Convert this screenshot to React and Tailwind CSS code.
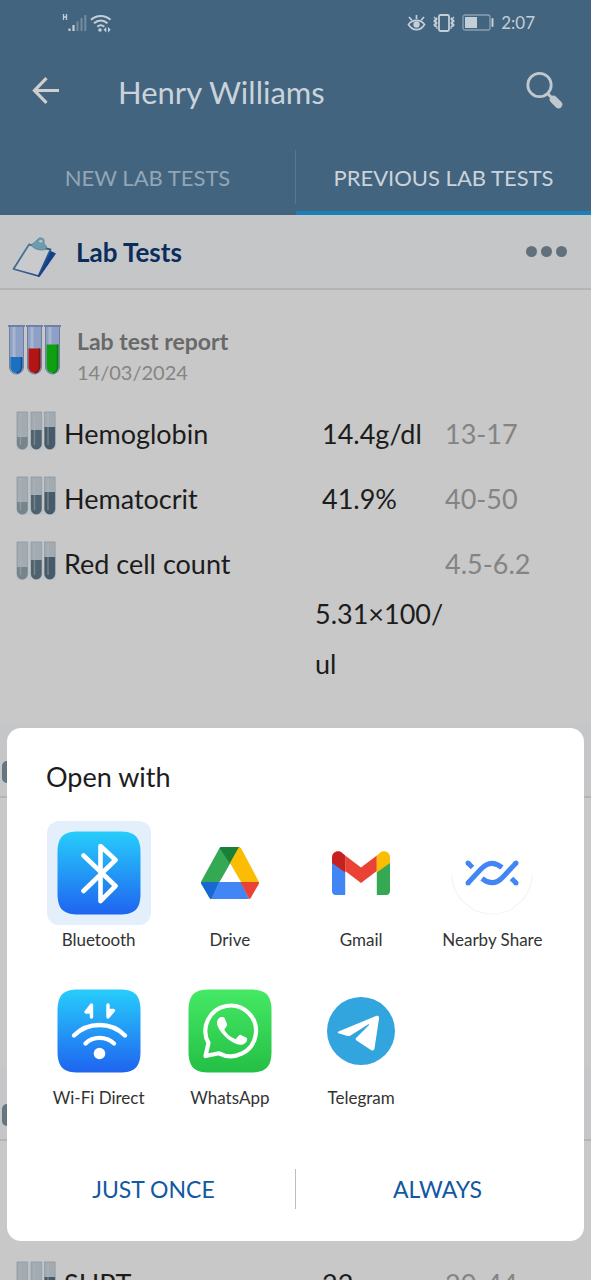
import React, { useState } from 'react';

const results = [
  { name: 'Hemoglobin', value: '14.4g/dl', range: '13-17' },
  { name: 'Hematocrit', value: '41.9%', range: '40-50' },
  { name: 'Red cell count', value: '5.31×100/ ul', range: '4.5-6.2', wraps: true },
];

const moreResults = [{ name: 'SHPT', value: '22', range: '20-44' }];

const SignalIcon = () => (
  <svg width="25" height="20" viewBox="0 0 25 20" fill="none">
    <path d="M1.5 1v6M4.5 1v6M1.5 4h3" stroke="#c3ced8" strokeWidth="1.3" />
    <path d="M7.5 15.5V18M11.5 12v6" stroke="#c3ced8" strokeWidth="2.2" />
    <path d="M15.5 8.5V18M19.5 5v13M23.3 2v16" stroke="#718ba1" strokeWidth="2" />
  </svg>
);

const WifiIcon = () => (
  <svg width="22" height="20" viewBox="0 0 22 20" fill="none" stroke="#c3ced8" strokeWidth="2">
    <path d="M1 6.8c5.6-5.2 14-5.2 19.5 0M4 10.3c4-3.7 9.5-3.7 13.5 0M7.3 13.7c2.2-1.900 4.8-1.900 7 0" />
    <circle cx="10" cy="17" r="1.8" fill="#c3ced8" stroke="none" />
    <path d="M16.300 14 13.6 16.800l2.700 2.600zM18 14l2.700 2.800L18 19.400z" fill="#c3ced8" stroke="none" />
  </svg>
);

const EyeIcon = () => (
  <svg width="19" height="18" viewBox="0 0 19 18" fill="none" stroke="#c3ced8" strokeWidth="1.7">
    <path d="M1.5 10.5C5.5 5 13.5 5 17.5 10.5 13.5 17.3 5.5 17.3 1.5 10.5z" />
    <path d="M9.5 5V1M4.800 6.200 2 3M14.200 6.200 17 3" />
    <circle cx="9.5" cy="10.5" r="3.2" fill="#c3ced8" stroke="none" />
  </svg>
);

const VibrateIcon = () => (
  <svg width="22" height="18" viewBox="0 0 22 18" fill="none" stroke="#c3ced8" strokeWidth="1.8">
    <rect x="6" y="1" width="10" height="16" rx="1.5" />
    <path d="M1 3l1.800 2L1 7l1.800 2L1 11l1.800 2M3.300 3.500 4 5 2.500 7 4 9l-1.500 2L4 13v2M21 3l-1.800 2L21 7l-1.800 2 1.800 2-1.800 2M18.700 3.500 18 5l1.500 2L18 9l1.500 2-1.500 2v2" strokeWidth="1.2" />
  </svg>
);

const BatteryIcon = () => (
  <svg width="32" height="17" viewBox="0 0 32 17">
    <rect x="1" y="1" width="27" height="15" rx="2" fill="none" stroke="#8ba0b2" strokeWidth="1.3" />
    <rect x="3" y="3" width="12" height="11" fill="#c3ced8" />
    <rect x="29.5" y="4" width="2" height="9" rx="1" fill="#c3ced8" />
  </svg>
);

const BackIcon = () => (
  <svg width="27" height="27" viewBox="0 0 27 27" fill="none" stroke="#d0cfcc" strokeWidth="3.2">
    <path d="M27 13.500H3.500M14.500 1.200 2.500 13.500 14.500 25.800" />
  </svg>
);

const SearchIcon = () => (
  <svg width="37" height="38" viewBox="0 0 37 38" fill="none" stroke="#c0c7cd">
    <circle cx="13.5" cy="14" r="11.7" strokeWidth="2.8" />
    <path d="m21.5 22.500 5 5" strokeWidth="3" />
    <path d="m27.500 28.500 5 5" strokeWidth="7.5" strokeLinecap="round" />
  </svg>
);

const ClipboardIcon = () => (
  <svg width="60" height="68" viewBox="0 0 60 68">
    <defs>
      <linearGradient id="board" x1="0" y1="0" x2="1" y2="1">
        <stop offset="0" stopColor="#5a8699" />
        <stop offset="1" stopColor="#153c80" />
      </linearGradient>
    </defs>
    <path d="m49 32 7 3.500L39.500 59 36 57z" fill="#12418c" />
    <path d="m29 26.500 21.500 5L38.500 58 13.500 51z" fill="#c9cace" stroke="url(#board)" strokeWidth="1.8" strokeLinejoin="round" />
    <path d="m31 27 3.500-2.500 3-3c1.500-2.500 6.500-2 6.500 1v3l2.500 3-1 3c-5 1.500-12-.5-14.500-4.500z" fill="#6c9cae" stroke="#4d8296" strokeWidth=".8" />
    <ellipse cx="40.800" cy="23.200" rx="1.8" ry="1.300" fill="#b9c5c9" />
  </svg>
);

const FolderIcon = () => (
  <svg width="60" height="60" viewBox="0 0 60 60">
    <rect x="2" y="31" width="48" height="22" rx="5" fill="#66767f" />
  </svg>
);

const TubesIcon = () => (
  <svg width="54" height="50" viewBox="0 0 54 50">
    {[
      { x: 1.5, fill: '#1b70c0', shade: '#0f4e91', top: 32 },
      { x: 19.5, fill: '#b31515', shade: '#7d1414', top: 23.5 },
      { x: 37.5, fill: '#0fa012', shade: '#0b7a13', top: 19.5 },
    ].map(tube => (
      <g key={tube.x}>
        <path d={`M${tube.x} 1V42a7 7 0 0 0 14 0V1z`} fill="#8fa0c6" stroke="#6e7f9f" />
        <path d={`M${tube.x + 4.5} 2V32`} stroke="#a9b5ce" strokeWidth="3" />
        <path d={`M${tube.x + 1} ${tube.top}V42a6 6 0 0 0 12 0V${tube.top}z`} fill={tube.fill} />
        <path d={`M${tube.x + 12} ${tube.top}V42a6 6 0 0 1-5 6`} stroke={tube.shade} strokeWidth="1.5" fill="none" />
        <path d={`M${tube.x - 1.5} 1h17`} stroke="#6f80a8" strokeWidth="2" />
      </g>
    ))}
  </svg>
);

const SmallTubesIcon = () => (
  <svg width="40" height="46" viewBox="0 0 40 46">
    <rect width="40" height="39" fill="#bcc3c7" opacity=".6" />
    {[
      { x: 1, fill: '#76848d', top: 26 },
      { x: 15, fill: '#4f626f', top: 19 },
      { x: 28.5, fill: '#465a69', top: 16 },
    ].map(tube => (
      <g key={tube.x}>
        <path d={`M${tube.x} 1V33a5.3 5.3 0 0 0 10.600 0V1z`} fill="#a2abb1" stroke="#939da5" strokeWidth=".8" />
        <path d={`M${tube.x} ${tube.top}V33a5.3 5.3 0 0 0 10.600 0V${tube.top}z`} fill={tube.fill} />
        <path d={`M${tube.x + 3.5} 2V34`} stroke="#b5bcc1" strokeWidth="1.5" opacity=".4" />
      </g>
    ))}
  </svg>
);

const AppTile = ({ id, from, to, children }) => (
  <svg width="84" height="84" viewBox="0 0 84 84">
    <defs>
      <linearGradient id={id} x1="0" y1="0" x2="0" y2="1">
        <stop offset="0" stopColor={from} />
        <stop offset="1" stopColor={to} />
      </linearGradient>
    </defs>
    <path
      d="M22 .5h40c16 0 21.500 5.500 21.500 21.500v40c0 16-5.500 21.500-21.500 21.500H22C6 83.500.5 78 .5 62V22C.5 6 6 .5 22 .5z"
      fill={`url(#${id})`}
    />
    {children}
  </svg>
);

const BluetoothIcon = () => (
  <AppTile id="bluetooth" from="#27cdfb" to="#1f64f0">
    <path d="m26.500 24.500 32 30.500L43.500 70V15L58.500 29 26.500 60" fill="none" stroke="#fff" strokeWidth="4.6" strokeLinecap="round" strokeLinejoin="round" />
  </AppTile>
);

const WifiDirectIcon = () => (
  <AppTile id="wifidirect" from="#27cdfb" to="#1f64f0">
    <g fill="none" stroke="#fff" strokeLinecap="round" strokeLinejoin="round">
      <path d="M17 46.500c14-14 37-14 51 0M28.500 54.500c7.500-7.500 20.500-7.500 28.500 0" strokeWidth="4.4" />
      <path d="M34.500 28V16l-5.500 7h5.500M51 16v12l5.500-6.500H51" strokeWidth="3.4" fill="#fff" />
    </g>
    <circle cx="42.500" cy="64.500" r="5.800" fill="#fff" />
  </AppTile>
);

const WhatsAppIcon = () => (
  <AppTile id="whatsapp" from="#45e965" to="#24bf45">
    <path d="M20.500 54A25.300 25.300 0 1 1 31 64.300L17.500 67z" fill="none" stroke="#fff" strokeWidth="4.2" strokeLinejoin="round" />
    <path d="M29 33.500c0-3 2.500-5.500 4.500-5.500 2.500 0 3 .5 3.500 2l2 5c.5 1.500-.5 2.500-2.200 4.800-.5.700-.5 1 0 1.800 2.500 4 5.500 6.500 9.800 8.200.8.300 1.300.2 1.900-.5l2.300-2.800c.7-.9 1.400-.9 2.200-.5l5 2.500c1.200.6 1.300 1 1.100 2.300-.6 3.200-3.500 5-6.600 5C43 55 29 42 29 33.500z" fill="#fff" />
  </AppTile>
);

const DriveIcon = () => (
  <svg width="58" height="52" viewBox="0 0 58 52">
    <path d="M20 0h19L29 17 10.500 52c-1 0-2-1-2.500-2L.4 37c-.5-1-.5-2 0-3L18 2c.5-1 1-2 2-2z" fill="#34a853" />
    <path d="M20 0h18L29 16.500 18.500 1z" fill="#188038" />
    <path d="M38 0c1 0 2 1 2.500 2l17 32c.5 1 .5 2 0 3L57 35H40L29 16z" fill="#fbbc04" />
    <path d="M0 35h18L10.500 52c-1 0-2-1-2.500-2L.5 37z" fill="#1967d2" />
    <path d="M18 35h22l8 17H10.500z" fill="#4285f4" />
    <path d="M39.500 35H58c0 1 0 1.500-.5 2.500l-7.200 12.500c-.6 1-1.300 2-2.300 2z" fill="#ea4335" />
    <path d="M29 17 39.500 35h-21z" fill="#fff" />
  </svg>
);

const GmailIcon = () => (
  <svg width="58" height="44" viewBox="0 0 58 44">
    <path d="M0 11v29a3.800 3.800 0 0 0 4 4h9.200V20z" fill="#4285f4" />
    <path d="M44.800 44H54a3.800 3.800 0 0 0 4-4V11L44.800 20z" fill="#34a853" />
    <path d="M13.200 4.500 29 16.500l15.800-12V20L29 32 13.200 20z" fill="#ea4335" />
    <path d="M0 6.500v5.500l13.200 9.500v-17L10 1.800C6-1.500 0 1 0 6.500z" fill="#c5221f" />
    <path d="M44.800 4.500v17L58 12V6.500C58 1 52-1.500 48 1.800z" fill="#fbbc04" />
  </svg>
);

const NearbyShareIcon = () => (
  <svg width="84" height="84" viewBox="0 0 84 84" fill="none" stroke="#4285f4" strokeWidth="5">
    <path d="M2 43a40 40 0 0 0 80 0" stroke="#f5f5f6" strokeWidth="1.2" />
    <circle cx="18" cy="52" r="2.5" fill="#4285f4" stroke="none" />
    <circle cx="66" cy="32" r="2.5" fill="#4285f4" stroke="none" />
    <circle cx="18" cy="32" r="2.5" fill="#4285f4" stroke="none" />
    <circle cx="66" cy="52" r="2.5" fill="#4285f4" stroke="none" />
    <path d="M18 52 31 38c6-6.500 13-8 21-1.500" />
    <path d="M66 32 53 46c-6 6.500-13 8-21 1.500" />
    <path d="m18 32 4.500 4.500M66 52l-4.500-4.500" />
  </svg>
);

const TelegramIcon = () => (
  <svg width="68" height="68" viewBox="0 0 68 68">
    <circle cx="34" cy="34" r="34" fill="#32a5df" />
    <path d="M11.500 34.500 49 19c2-.8 3.300.2 3 2.500l-4.500 30c-.4 2-1.700 2.500-3.500 1.400L29.500 43.500c-1.200-1-1.200-1.700-.2-2.700L42 28c.5-.8-.2-1-1-.5L23.500 38.500c-1 .6-2 .7-3 .4l-9-2.700c-1-.4-1-1.200 0-1.700z" fill="#fff" />
  </svg>
);

const apps = [
  { name: 'Bluetooth', icon: <BluetoothIcon /> },
  { name: 'Drive', icon: <DriveIcon /> },
  { name: 'Gmail', icon: <GmailIcon /> },
  { name: 'Nearby Share', icon: <NearbyShareIcon /> },
  { name: 'Wi-Fi Direct', icon: <WifiDirectIcon /> },
  { name: 'WhatsApp', icon: <WhatsAppIcon /> },
  { name: 'Telegram', icon: <TelegramIcon /> },
];

const SectionHeader = ({ icon, title }) => (
  <div className="flex h-[75px] items-center border-b-2 border-[#b3b4b6] bg-[#c5c6c8] pr-6">
    {icon}
    {title && (
      <>
        <h2 className="ml-4 flex-1 text-[26px] leading-[36px] font-bold text-[#0a2d5c]">{title}</h2>
        <button type="button" aria-label="More options" className="flex gap-1">
          <span className="h-[11px] w-[11px] rounded-full bg-[#62707c]" />
          <span className="h-[11px] w-[11px] rounded-full bg-[#62707c]" />
          <span className="h-[11px] w-[11px] rounded-full bg-[#62707c]" />
        </button>
      </>
    )}
  </div>
);

const ResultsTable = ({ rows }) => (
  <table className="w-full table-fixed text-left text-[27px] leading-[50px] text-[#1c1c1c]">
    <colgroup>
      <col />
      <col className="w-[130px]" />
      <col className="w-[146px]" />
    </colgroup>
    <tbody>
      {rows.map(row => (
        <tr key={row.name} className="align-top">
          <th scope="row" className="pt-[7px] pb-2 pl-4 font-normal">
            <div className="flex items-center gap-2">
              <SmallTubesIcon />
              {row.name}
            </div>
          </th>
          <td className={row.wraps ? 'pt-[57px] pb-2' : 'pt-[7px] pb-2 pl-[7px]'}>{row.value}</td>
          <td className="pt-[7px] pb-2 text-[#848484]">{row.range}</td>
        </tr>
      ))}
    </tbody>
  </table>
);

const OpenWithSheet = () => {
  const [selected, setSelected] = useState('Bluetooth');

  return (
    <div className="fixed inset-0 flex items-end px-[7px] pb-[39px]">
      <div role="dialog" aria-label="Open with" className="w-full rounded-[14px] bg-white pt-[31px]">
        <h2 className="px-[39px] text-[27px] leading-[36px] text-[#1c1c1c]">Open with</h2>

        <div className="mt-[26px] grid grid-cols-4 gap-y-[27px] px-[26px]">
          {apps.map(app => (
            <button
              key={app.name}
              type="button"
              onClick={() => setSelected(app.name)}
              className="flex flex-col items-center gap-[3px]"
            >
              <span
                className={`flex h-[104px] w-[104px] items-center justify-center rounded-[12px] ${
                  selected === app.name ? 'bg-[#e3f0fc]' : ''
                }`}
              >
                {app.icon}
              </span>
              <span className="text-[17px] leading-[24px] whitespace-nowrap text-[#333333]">{app.name}</span>
            </button>
          ))}
        </div>

        <div className="mt-[27px] flex h-[104px] items-center px-[5px] text-[23px] text-[#1258a3]">
          <button type="button" className="flex-1">JUST ONCE</button>
          <span className="h-10 w-px bg-[#bdbdbd]" />
          <button type="button" className="flex-1">ALWAYS</button>
        </div>
      </div>
    </div>
  );
};

const App = () => {
  return (
    <div className="flex h-screen flex-col overflow-hidden bg-[#c8c8c8] font-['Lato',sans-serif]">
      <header className="shrink-0 bg-[#42647f] text-[#cbd3da]">
        {/* Status bar */}
        <div className="flex h-[45px] items-center pr-14 pl-[62px]">
          <SignalIcon />
          <span className="ml-[3px] flex-1"><WifiIcon /></span>
          <div className="flex items-center gap-[7px] text-[17px] text-[#c3ced8]">
            <EyeIcon />
            <VibrateIcon />
            <BatteryIcon />
            <span>2:07</span>
          </div>
        </div>

        {/* App bar */}
        <div className="flex h-[94px] items-center pr-7 pl-8">
          <button type="button" aria-label="Back" className="pb-1"><BackIcon /></button>
          <h1 className="ml-[59px] flex-1 text-[31px] leading-[40px]">Henry Williams</h1>
          <button type="button" aria-label="Search" className="pb-1"><SearchIcon /></button>
        </div>

        {/* Tabs */}
        <div role="tablist" className="flex h-[76px] items-center text-[22px]">
          <button type="button" role="tab" aria-selected="false" className="h-full flex-1 text-[#92a6b6]">
            NEW LAB TESTS
          </button>
          <span className="h-[54px] w-px bg-[#587892]" />
          <button type="button" role="tab" aria-selected="true" className="h-full flex-1 border-b-4 border-[#1c7fb8] pt-1">
            PREVIOUS LAB TESTS
          </button>
        </div>
      </header>

      <main className="min-h-0 flex-1 overflow-hidden">
        <SectionHeader icon={<ClipboardIcon />} title="Lab Tests" />
        <div className="flex h-[112px] items-center pt-2 pl-2">
          <TubesIcon />
          <div className="ml-[15px] pt-[14px]">
            <h3 className="text-[23px] leading-[31px] font-bold text-[#696969]">Lab test report</h3>
            <p className="text-[20px] leading-[31px] text-[#858585]">14/03/2024</p>
          </div>
        </div>
        <ResultsTable rows={results} />

        <div className="pt-[26px]">
          <SectionHeader icon={<FolderIcon />} />
        </div>
        <div className="pt-[268px]">
          <SectionHeader icon={<FolderIcon />} />
        </div>
        <div className="pt-[111px]">
          <ResultsTable rows={moreResults} />
        </div>
      </main>

      <OpenWithSheet />
    </div>
  );
};

export default App;
